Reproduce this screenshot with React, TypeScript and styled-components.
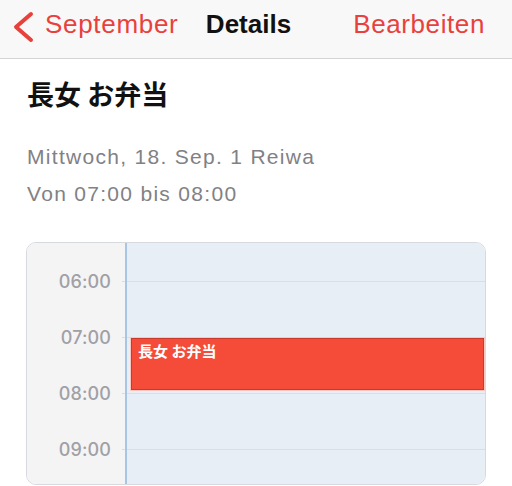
import React from 'react';
import styled, { createGlobalStyle } from 'styled-components';

/*
 * Styles.
 */

const GlobalStyle = createGlobalStyle`
  html, body {
    margin: 0;
    padding: 0;
    background: #ffffff;
    overflow: hidden;
  }

  body {
    font-family: 'Liberation Sans', 'Noto Sans CJK JP', sans-serif;
  }
`;

const red = '#e8413c';

const Page = styled.div`
  width: 512px;
  height: 486px;
  overflow: hidden;
`;

const NavBar = styled.header`
  height: 59px;
  box-sizing: border-box;
  padding: 11px 27px 0 12px;
  display: grid;
  grid-template-columns: 1fr auto 1fr;
  align-items: start;
  background: #f8f8f8;
  border-bottom: 1px solid #d4d4d4;
`;

const BackButton = styled.div`
  display: flex;
  align-items: flex-start;
  gap: 9px;
  color: ${red};
  font-size: 26px;
  line-height: 26px;
  letter-spacing: 0.7px;
`;

const NavTitle = styled.div`
  font-size: 26px;
  line-height: 26px;
  font-weight: 700;
  color: #111111;
`;

const NavAction = styled.div`
  justify-self: end;
  color: ${red};
  font-size: 26px;
  line-height: 26px;
  letter-spacing: 0.6px;
`;

const Content = styled.main`
  padding: 0 26px;
`;

const Title = styled.h1`
  margin: 21px 0 31px 1px;
  font-family: 'Noto Sans CJK JP', sans-serif;
  font-size: 27px;
  line-height: 27px;
  font-weight: 700;
  color: #111111;
`;

const InfoLine = styled.div`
  margin-left: 1px;
  font-size: 21px;
  line-height: 37px;
  letter-spacing: 1.3px;
  color: #818185;
`;

const Card = styled.section`
  margin-top: 30px;
  height: 243px;
  box-sizing: border-box;
  border: 1px solid #d6d9dd;
  border-radius: 10px;
  overflow: hidden;
  display: grid;
  grid-template-columns: 98px 1fr;
`;

const Gutter = styled.div`
  background: #f4f4f5;
  padding: 10px 14px 0 0;
  display: flex;
  flex-direction: column;
  align-items: flex-end;
`;

const HourLabel = styled.div`
  height: 56px;
  display: flex;
  align-items: center;
  font-family: 'Inter', 'Liberation Sans', sans-serif;
  font-size: 18px;
  font-weight: 500;
  letter-spacing: 0.1px;
  color: #a0a0a5;
`;

const Timeline = styled.div`
  position: relative;
  background: #e8eef5;
  border-left: 2px solid #a9c5e4;
  padding-top: 38px;
`;

const HourRow = styled.div`
  position: relative;
  height: 56px;
  box-sizing: border-box;
  border-top: 1px solid #d7dee7;

  &::before {
    content: '';
    position: absolute;
    left: -5px;
    top: -1px;
    width: 3px;
    height: 1px;
    background: #d7dee7;
  }
`;

const EventBlock = styled.div<{ $top: number; $height: number }>`
  position: absolute;
  top: ${(p) => p.$top}px;
  height: ${(p) => p.$height}px;
  left: 4px;
  right: 1px;
  box-sizing: border-box;
  padding: 3px 6px;
  background: #f54c39;
  border: 1px solid #c9392c;
  box-shadow: 0 0 0 1px #f7c9c2;
  color: #ffffff;
  font-family: 'Noto Sans CJK JP', sans-serif;
  font-size: 15px;
  line-height: 18px;
  font-weight: 700;
`;

/*
 * Data.
 */

const hours = ['06:00', '07:00', '08:00', '09:00'];

/*
 * App component.
 */

function ChevronLeft() {
  return (
    <svg width="24" height="32" viewBox="0 0 24 32">
      <polyline
        points="19,3 4,16 19,29"
        fill="none"
        stroke={red}
        strokeWidth="4"
        strokeLinecap="round"
        strokeLinejoin="round"
      />
    </svg>
  );
}

export default function App() {
  return (
    <Page>
      <GlobalStyle />
      <NavBar>
        <BackButton>
          <ChevronLeft />
          <span>{'September'}</span>
        </BackButton>
        <NavTitle>{'Details'}</NavTitle>
        <NavAction>{'Bearbeiten'}</NavAction>
      </NavBar>

      <Content>
        <Title>{'長女 お弁当'}</Title>
        <InfoLine>{'Mittwoch, 18. Sep. 1 Reiwa'}</InfoLine>
        <InfoLine>{'Von 07:00 bis 08:00'}</InfoLine>

        <Card>
          <Gutter>
            {hours.map((hour) => (
              <HourLabel key={hour}>{hour}</HourLabel>
            ))}
          </Gutter>
          <Timeline>
            {hours.map((hour) => (
              <HourRow key={hour} />
            ))}
            <EventBlock $top={95} $height={52}>
              {'長女 お弁当'}
            </EventBlock>
          </Timeline>
        </Card>
      </Content>
    </Page>
  );
}
